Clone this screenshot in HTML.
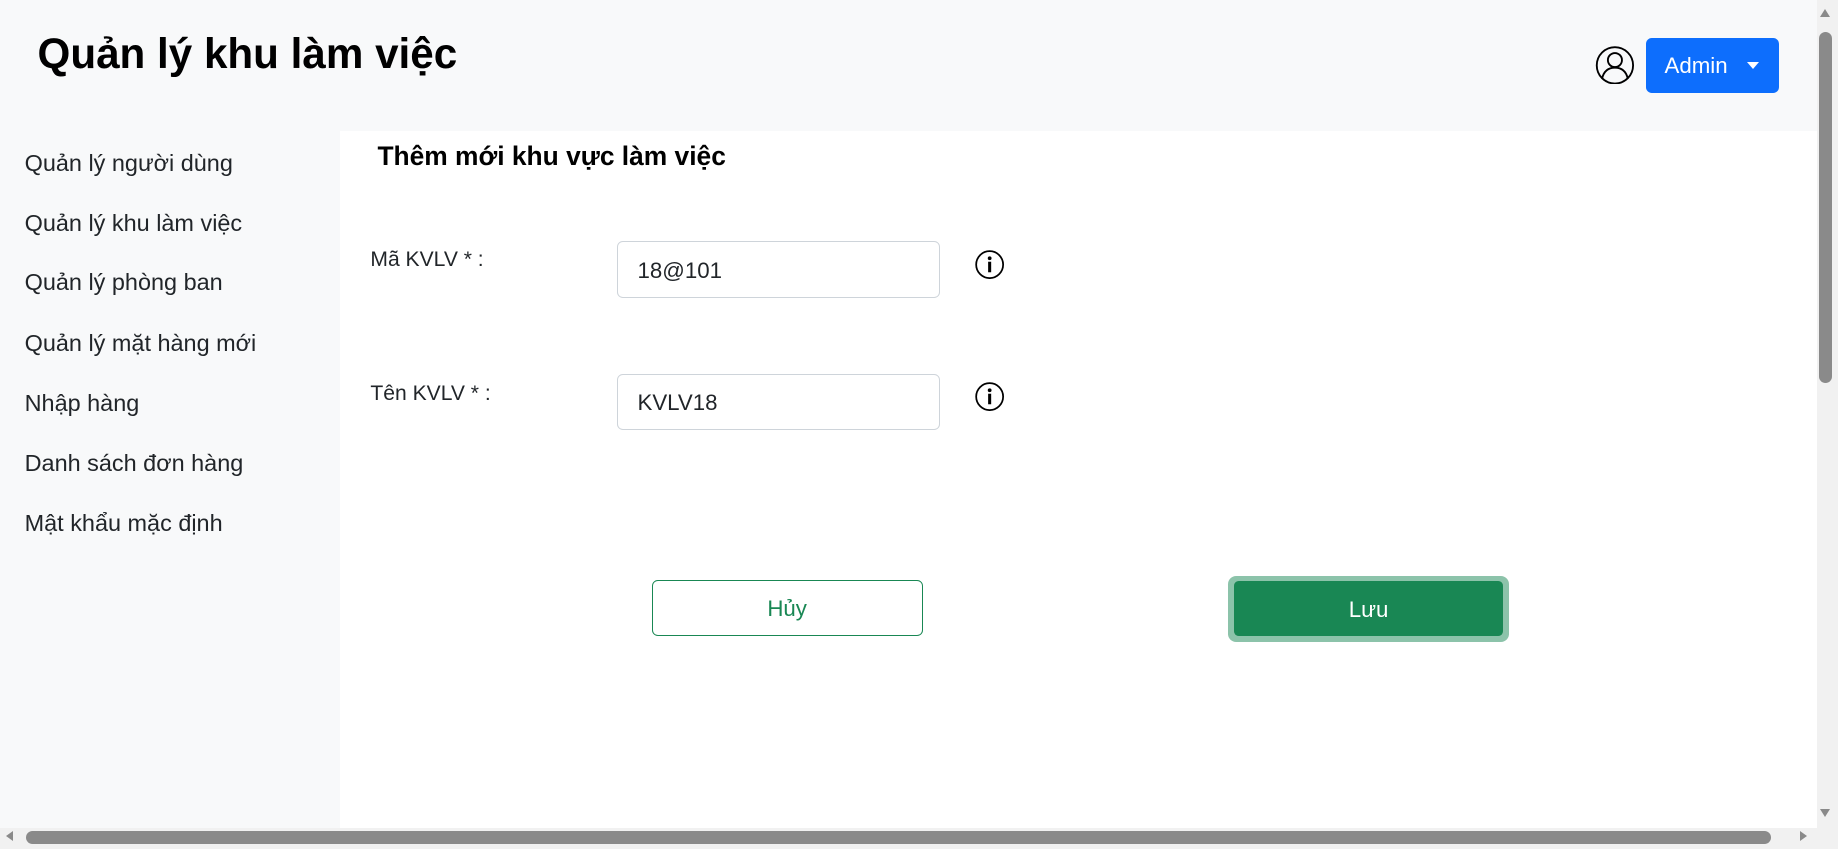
<!DOCTYPE html>
<html><head><meta charset="utf-8"><style>
html,body{margin:0;padding:0;overflow:hidden;width:1838px;height:849px;background:#fff}
#p{position:absolute;left:0;top:0;width:1568px;height:724px;zoom:1.17219;font-family:"Liberation Sans",sans-serif;color:#212529;overflow:hidden}
.a{position:absolute}
.hdr{left:0;top:0;width:1550px;height:112px;background:#f8f9fa}
.side{left:0;top:112px;width:290px;height:594px;background:#f8f9fa}
.nav{left:21px;font-size:20px;line-height:24px;color:#212529}
.lbl{left:316px;font-size:18px;line-height:22px}
.inp{left:526px;width:276px;height:48px;border:1px solid #ced4da;border-radius:5px;background:#fff;box-sizing:border-box}
.inp span{position:absolute;left:17px;top:13px;font-size:19px;line-height:22px}
</style></head><body><div id="p">
<div class="a hdr"></div>
<div class="a" style="left:32px;top:24px;font-size:36px;font-weight:bold;line-height:44px;color:#000">Quản lý khu làm việc</div>
<svg class="a" style="left:1361px;top:39px" width="34" height="33" viewBox="0 0 34 33"><circle cx="17" cy="16.5" r="15.5" fill="none" stroke="#000" stroke-width="1.6"/><circle cx="17" cy="12" r="6" fill="none" stroke="#000" stroke-width="1.6"/><path d="M6 28 C7.5 21 11.5 18.5 17 18.5 C22.5 18.5 26.5 21 28 28" fill="none" stroke="#000" stroke-width="1.6"/></svg>
<div class="a" style="left:1404px;top:32px;width:114px;height:47px;background:#0d6efd;border-radius:5px;color:#fff;font-size:19px;line-height:47px"><span style="position:absolute;left:16px">Admin</span><span style="position:absolute;left:86px;top:21px;width:0;height:0;border-left:5.5px solid transparent;border-right:5.5px solid transparent;border-top:6px solid #fff"></span></div>
<div class="a side"></div>
<div class="a nav" style="top:127px">Quản lý người dùng</div>
<div class="a nav" style="top:178px">Quản lý khu làm việc</div>
<div class="a nav" style="top:229px">Quản lý phòng ban</div>
<div class="a nav" style="top:281px">Quản lý mặt hàng mới</div>
<div class="a nav" style="top:332px">Nhập hàng</div>
<div class="a nav" style="top:383px">Danh sách đơn hàng</div>
<div class="a nav" style="top:434px">Mật khẩu mặc định</div>
<div class="a" style="left:322px;top:120px;font-size:22.5px;font-weight:bold;line-height:26px;color:#000">Thêm mới khu vực làm việc</div>
<div class="a lbl" style="top:211px">Mã KVLV * :</div>
<div class="a lbl" style="top:325px">Tên KVLV * :</div>
<div class="a inp" style="top:206px"><span>18@101</span></div>
<div class="a inp" style="top:319px"><span>KVLV18</span></div>
<svg class="a" style="left:832px;top:213px" width="25" height="25" viewBox="0 0 25 25"><circle cx="12.5" cy="12.5" r="11.5" fill="none" stroke="#000" stroke-width="1.5"/><circle cx="12.5" cy="7" r="1.6"/><rect x="11.2" y="10" width="2.6" height="9"/></svg>
<svg class="a" style="left:832px;top:326px" width="25" height="25" viewBox="0 0 25 25"><circle cx="12.5" cy="12.5" r="11.5" fill="none" stroke="#000" stroke-width="1.5"/><circle cx="12.5" cy="7" r="1.6"/><rect x="11.2" y="10" width="2.6" height="9"/></svg>
<div class="a" style="left:556px;top:495px;width:231px;height:48px;border:1px solid #198754;border-radius:5px;box-sizing:border-box;color:#198754;font-size:19px;line-height:48px;text-align:center">Hủy</div>
<div class="a" style="left:1048px;top:491px;width:239px;height:57px;background:#8cc3aa;border-radius:7px"></div>
<div class="a" style="left:1053px;top:496px;width:229px;height:47px;background:#198754;border-radius:4px;color:#fff;font-size:19px;line-height:50px;text-align:center">Lưu</div>
<div class="a" style="left:1550px;top:0;width:18px;height:706px;background:#f1f1f1"></div>
<div class="a" style="left:1552px;top:27px;width:11px;height:300px;background:#8a8a8a;border-radius:6px"></div>
<div class="a" style="left:1553px;top:8px;width:0;height:0;border-left:5px solid transparent;border-right:5px solid transparent;border-bottom:7px solid #8a8a8a"></div>
<div class="a" style="left:1553px;top:690px;width:0;height:0;border-left:5px solid transparent;border-right:5px solid transparent;border-top:7px solid #8a8a8a"></div>
<div class="a" style="left:0;top:706px;width:1568px;height:18px;background:#f1f1f1"></div>
<div class="a" style="left:22px;top:709px;width:1489px;height:11px;background:#8a8a8a;border-radius:6px"></div>
<div class="a" style="left:5px;top:709px;width:0;height:0;border-top:5px solid transparent;border-bottom:5px solid transparent;border-right:6px solid #8a8a8a"></div>
<div class="a" style="left:1536px;top:709px;width:0;height:0;border-top:5px solid transparent;border-bottom:5px solid transparent;border-left:6px solid #8a8a8a"></div>
</div></body></html>
